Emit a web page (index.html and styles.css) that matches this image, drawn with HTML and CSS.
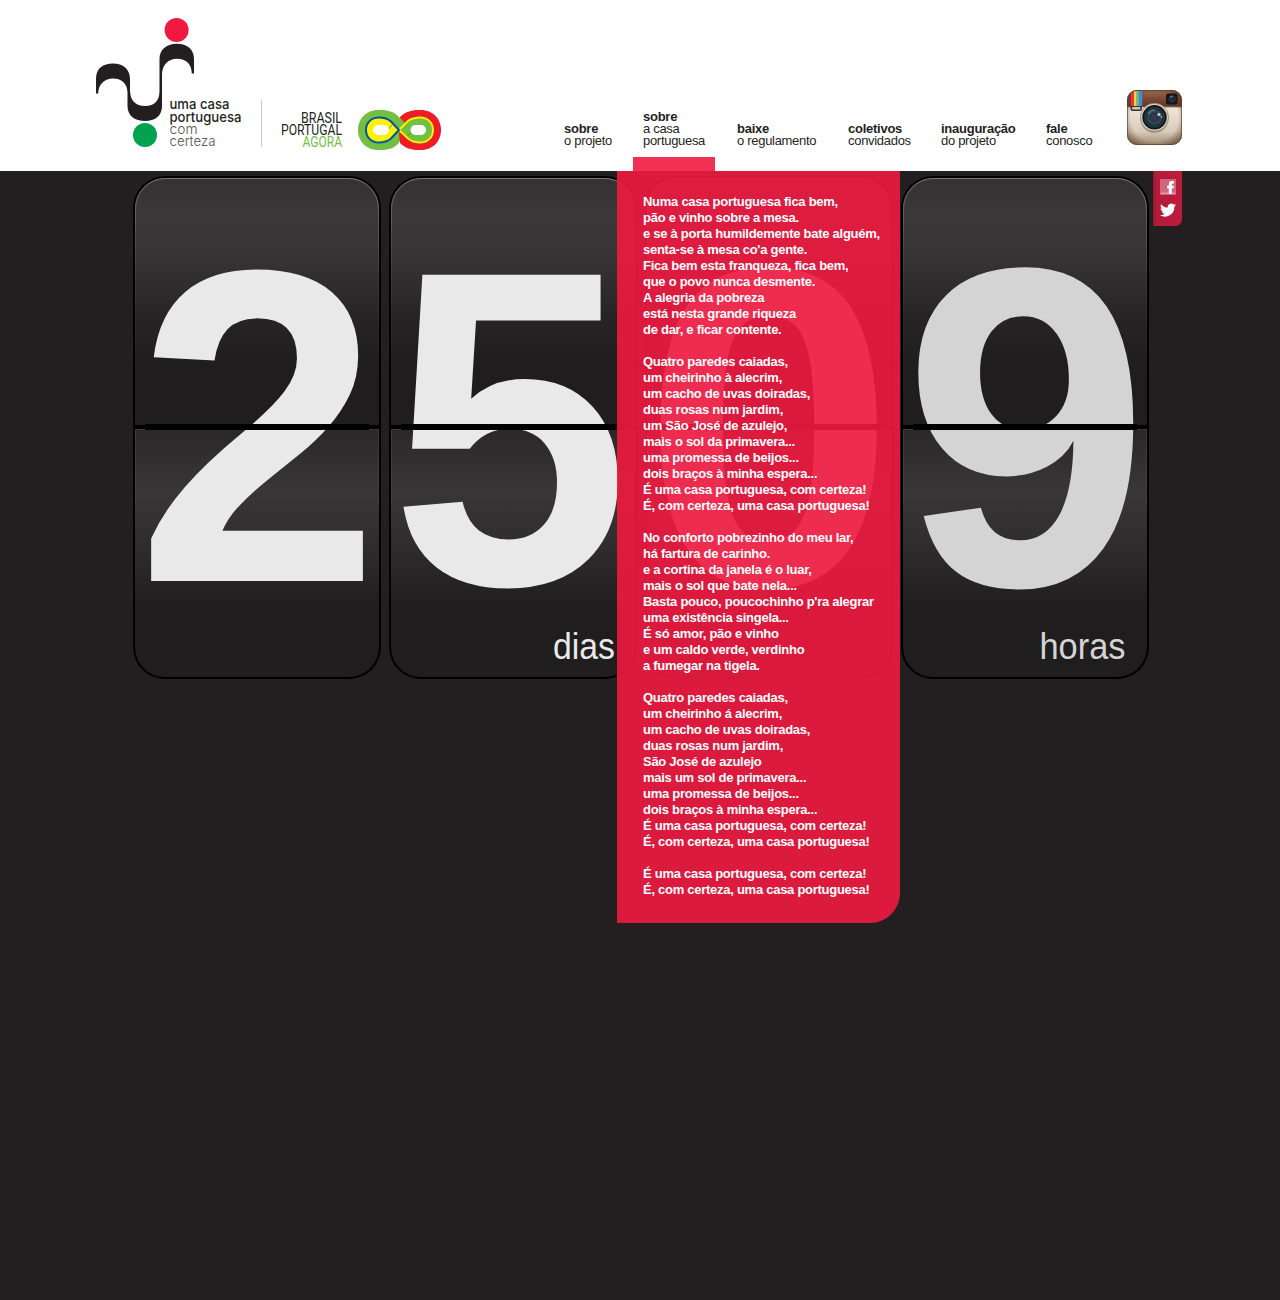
FILE: index.html
```html
<!DOCTYPE html>
<html lang="pt">
<head>
<meta charset="utf-8">
<title>Uma casa portuguesa com certeza</title>
<link rel="stylesheet" href="styles.css">
</head>
<body>
<header class="header">
  <svg class="brand" width="360" height="171" viewBox="90 0 360 171" role="img" aria-label="Uma casa portuguesa com certeza, Brasil Portugal agora">
    <circle cx="176.6" cy="30" r="12" fill="#f0193f"/>
    <circle cx="145" cy="135" r="12" fill="#00a24f"/>
    <path fill="#231f20" d="M96 93.500V79C96 68 103 63.400 113 63.400S130 69 130 79V90C130 100 135 106 145 106S159.500 100 159.500 91V59C159.500 49 167 43.700 177 43.700S194 49 194 59V73.500H191.800C191.800 64 186 58.700 177 58.700S162 65 162 75V106C162 116 155 121 145 121S127.500 116 127.500 106V93C127.500 83 121 78.500 113 78.500S98.200 84 98.200 93.500Z"/>
    <g class="brand-name">
      <text x="169.500" y="109" textLength="60" lengthAdjust="spacingAndGlyphs">uma casa</text>
      <text x="169.500" y="121.500" textLength="72" lengthAdjust="spacingAndGlyphs">portuguesa</text>
      <g class="brand-light">
        <text x="169.500" y="134" textLength="28" lengthAdjust="spacingAndGlyphs">com</text>
        <text x="169.500" y="146.300" textLength="46" lengthAdjust="spacingAndGlyphs">certeza</text>
      </g>
    </g>
    <path d="M261.500 100V147" stroke="#c9c9c9"/>
    <g class="partner">
      <text x="301" y="122.800" textLength="41" lengthAdjust="spacingAndGlyphs">BRASIL</text>
      <text x="281" y="134.900" textLength="61" lengthAdjust="spacingAndGlyphs">PORTUGAL</text>
      <text x="302.500" y="146.800" textLength="39.500" lengthAdjust="spacingAndGlyphs" fill="#72bf44">AGORA</text>
    </g>
    <path fill="#ee1c25" d="M400 117C405 112 411 110 418 110H421C433 110 441 119 441 130S433 150 421 150H418C411 150 405 148 400 143Z"/>
    <path fill="#72bf44" d="M378 110H381C389 110 394 112 399 117L407 125L399 143C394 148 389 150 381 150H378C366 150 358 141 358 130S366 110 378 110Z"/>
    <path fill="#ee1c25" d="M399 131L407 125V143L405 145.500L399.500 140Z"/>
    <path fill="#72bf44" stroke="#fff200" stroke-width="2" d="M399 130L408 121C412 118 416 117.500 420 117.500C428 117.500 433 123 433 130S428 142.500 420 142.500C416 142.500 412 142 408 138.500Z"/>
    <path fill="#fff200" stroke="#0054a6" stroke-width="2" d="M399 130L391 121.500C387 118 384 117.500 379 117.500C371 117.500 366 123 366 130S371 142.500 379 142.500C384 142.500 387 142 391 138.500Z"/>
    <path d="M388 129.500L393 124M408 135.500L412 131.500" stroke="#756c20" stroke-width=".8"/>
    <rect x="373" y="125" width="16" height="10" rx="5" fill="#fff"/>
    <rect x="410.500" y="125" width="15.500" height="10" rx="5" fill="#fff"/>
  </svg>
  <nav class="nav">
    <a class="n1"><b>sobre</b>o projeto</a>
    <a class="n2 active"><b>sobre</b>a casa<br>portuguesa</a>
    <a class="n3"><b>baixe</b>o regulamento</a>
    <a class="n4"><b>coletivos</b>convidados</a>
    <a class="n5"><b>inauguração</b>do projeto</a>
    <a class="n6"><b>fale</b>conosco</a>
  </nav>
  <svg class="camera" width="55" height="55" viewBox="0 0 55 55" role="img" aria-label="Instagram">
    <defs>
      <linearGradient id="cream" x2="0" y2="1"><stop offset=".3" stop-color="#efe6d8"/><stop offset=".75" stop-color="#d9ccb9"/><stop offset="1" stop-color="#a08b75"/></linearGradient>
      <linearGradient id="leather" x2="0" y2="1"><stop stop-color="#9c6d52"/><stop offset=".5" stop-color="#7d4a33"/><stop offset="1" stop-color="#633524"/></linearGradient>
      <radialGradient id="edge" r=".7"><stop offset=".62" stop-color="#52351f" stop-opacity="0"/><stop offset="1" stop-color="#52351f" stop-opacity=".85"/></radialGradient>
      <radialGradient id="lens"><stop stop-color="#58304f"/><stop offset=".4" stop-color="#27344a"/><stop offset=".7" stop-color="#304c57"/><stop offset="1" stop-color="#090d14"/></radialGradient>
      <clipPath id="body"><rect width="55" height="55" rx="10"/></clipPath>
    </defs>
    <g clip-path="url(#body)">
      <rect width="55" height="55" fill="url(#cream)"/>
      <rect width="55" height="16.500" fill="url(#leather)"/>
      <path d="M0 16.800H55" stroke="#41251a" stroke-width=".8"/>
      <rect x="3.500" y="15" width="11.500" height="6" rx="2" fill="#38332c"/>
      <rect x="5" y="17" width="8.500" height="2.500" rx="1" fill="#cbc6b8"/>
      <rect width="55" height="55" fill="url(#edge)"/>
      <path fill="#f1294c" d="M4 1h3v15H4z"/><path fill="#f7d82b" d="M7 1h2.700v15H7z"/><path fill="#65b98a" d="M9.700 1h2.500v15H9.700z"/><path fill="#3c8be8" d="M12.200 1h3v15h-3z"/>
    </g>
    <rect x=".5" y=".5" width="54" height="54" rx="9.500" fill="none" stroke="#5b3a2a" stroke-opacity=".65"/>
    <rect x="39" y="3.500" width="11.500" height="11" rx="2.500" fill="#17131a"/><circle cx="45" cy="9" r="3.800" fill="#252e40"/><path d="M43 7l3-1" stroke="#71869a"/>
    <circle cx="27.500" cy="29" r="14" fill="#604832" opacity=".4"/>
    <circle cx="27.500" cy="27.300" r="14" fill="#d9d3c9" stroke="#8c7b69" stroke-width=".7"/>
    <circle cx="27.500" cy="27.300" r="12.200" fill="#15171b"/>
    <circle cx="27.500" cy="27.300" r="9.700" fill="url(#lens)" stroke="#416571" stroke-width=".7"/>
    <path d="M21 24q2.500-4 7-4" stroke="#56858c" stroke-width="2" fill="none" opacity=".7"/>
    <circle cx="32" cy="24.500" r="1.600" fill="#b9d3dd"/><circle cx="34.500" cy="27" r=".9" fill="#8fb0c5"/>
  </svg>
</header>

<main class="stage">
  <section class="clock">
    <svg class="card" viewBox="0 0 248 503">
      <defs>
        <linearGradient id="upper" x2="0" y2="1"><stop stop-color="#333132"/><stop offset=".12" stop-color="#393738"/><stop offset=".28" stop-color="#393637"/><stop offset=".56" stop-color="#272425"/><stop offset=".76" stop-color="#1f1d1e"/><stop offset="1" stop-color="#1f1d1e"/></linearGradient>
        <linearGradient id="lower" x2="0" y2="1"><stop stop-color="#292728"/><stop offset=".24" stop-color="#393637"/><stop offset=".42" stop-color="#322f30"/><stop offset=".73" stop-color="#1f1d1e"/><stop offset="1" stop-color="#1f1d1e"/></linearGradient>
        <linearGradient id="rim" x2="0" y2="1"><stop stop-color="#777"/><stop offset=".2" stop-color="#555"/><stop offset=".6" stop-color="#333" stop-opacity=".3"/><stop offset="1" stop-color="#222" stop-opacity="0"/></linearGradient>
        <g id="plate">
          <rect width="248" height="503" rx="32"/>
          <path fill="url(#upper)" d="M2 249V32A30 30 0 0 1 32 2H216A30 30 0 0 1 246 32V249Z"/>
          <path fill="none" stroke="url(#rim)" d="M2.500 249V32.500A30 30 0 0 1 32.500 2.500H215.500A30 30 0 0 1 245.500 32.500V249"/>
          <path fill="url(#lower)" d="M2 253H246V471A30 30 0 0 1 216 501H32A30 30 0 0 1 2 471Z"/>
          <path fill="none" stroke="#464445" d="M2.500 330V253.500H245.500V330" opacity=".7"/>
        </g>
        <path id="hinge" d="M2 249H12V248H236V249H246V253H236V254H12V253H2Z"/>
      </defs>
      <use href="#plate"/>
      <text class="digit" transform="translate(125.200 405) scale(.986 1)">2</text>
      <use href="#hinge"/>
    </svg>
    <svg class="card" viewBox="0 0 248 503">
      <use href="#plate"/>
      <text class="digit" transform="translate(121 408) scale(.966 1.008)">5</text>
      <text class="unit" x="164" y="483" textLength="62" lengthAdjust="spacingAndGlyphs">dias</text>
      <use href="#hinge"/>
    </svg>
    <svg class="card dim" viewBox="0 0 248 503">
      <use href="#plate"/>
      <text class="digit" transform="translate(124 409) scale(1.019 1.020)">0</text>
      <use href="#hinge"/>
    </svg>
    <svg class="card dim" viewBox="0 0 248 503">
      <use href="#plate"/>
      <text class="digit" transform="translate(125.300 409) scale(.995 1.020)">9</text>
      <text class="unit" x="138.500" y="483" textLength="86" lengthAdjust="spacingAndGlyphs">horas</text>
      <use href="#hinge"/>
    </svg>
  </section>

  <article class="lyrics">
    <p>Numa casa portuguesa fica bem,<br>pão e vinho sobre a mesa.<br>e se à porta humildemente bate alguém,<br>senta-se à mesa co'a gente.<br>Fica bem esta franqueza, fica bem,<br>que o povo nunca desmente.<br>A alegria da pobreza<br>está nesta grande riqueza<br>de dar, e ficar contente.</p>
    <p>Quatro paredes caiadas,<br>um cheirinho à alecrim,<br>um cacho de uvas doiradas,<br>duas rosas num jardim,<br>um São José de azulejo,<br>mais o sol da primavera...<br>uma promessa de beijos...<br>dois braços à minha espera...<br>É uma casa portuguesa, com certeza!<br>É, com certeza, uma casa portuguesa!</p>
    <p>No conforto pobrezinho do meu lar,<br>há fartura de carinho.<br>e a cortina da janela é o luar,<br>mais o sol que bate nela...<br>Basta pouco, poucochinho p'ra alegrar<br>uma existência singela...<br>É só amor, pão e vinho<br>e um caldo verde, verdinho<br>a fumegar na tigela.</p>
    <p>Quatro paredes caiadas,<br>um cheirinho á alecrim,<br>um cacho de uvas doiradas,<br>duas rosas num jardim,<br>São José de azulejo<br>mais um sol de primavera...<br>uma promessa de beijos...<br>dois braços à minha espera...<br>É uma casa portuguesa, com certeza!<br>É, com certeza, uma casa portuguesa!</p>
    <p>É uma casa portuguesa, com certeza!<br>É, com certeza, uma casa portuguesa!</p>
  </article>

  <aside class="social">
    <svg width="16" height="16" viewBox="0 0 16 16" role="img" aria-label="Facebook"><path fill="#d0667b" d="M0 0h16v16H0z"/><path fill="#e29aa8" d="M1 13.500h14V15H1z"/><path fill="#fff" d="M8.800 15V9.300H7V6.700h1.800V5.200C8.800 3 10 2 12 2h2v2.500h-1.200c-.8 0-1 .4-1 1v1.200H14l-.3 2.600h-1.900V15z"/></svg>
    <svg width="16" height="14" viewBox="0 0 24 20" role="img" aria-label="Twitter"><path fill="#fff" d="M24 2.600a10 10 0 0 1-2.800.8A5 5 0 0 0 23.300.7a10 10 0 0 1-3.100 1.200 4.900 4.900 0 0 0-8.400 4.500A14 14 0 0 1 1.700 1.200a4.900 4.900 0 0 0 1.500 6.600A5 5 0 0 1 1 7.200a4.900 4.900 0 0 0 4 4.900 5 5 0 0 1-2.300.1 4.900 4.900 0 0 0 4.600 3.400A10 10 0 0 1 0 17.600 14 14 0 0 0 21.500 5.100 10 10 0 0 0 24 2.600z"/></svg>
  </aside>
</main>
</body>
</html>
```

FILE: styles.css
```css
* { box-sizing: border-box; }

body {
  margin: 0;
  min-height: 1300px;
  background: #231f20;
  color: #231f20;
  font-family: "Liberation Sans", Arial, sans-serif;
}

.header {
  display: flex;
  height: 171px;
  padding-left: 90px;
  background: #fff;
}

.brand { flex: none; }

.brand-name {
  font: 500 14.5px Inter, sans-serif;
  fill: #231f20;
}

.brand-light {
  font-weight: 300;
  fill: #555;
}

.partner {
  font: 400 14px Roboto, sans-serif;
  fill: #231f20;
}

.nav {
  display: flex;
  flex: none;
  align-items: flex-end;
  margin-left: 114px;
  font-size: 13px;
  line-height: 12px;
  letter-spacing: -0.3px;
  white-space: nowrap;
}

.nav a {
  height: 61px;
  padding-top: 13px;
}

.nav b {
  display: block;
  letter-spacing: -0.25px;
}

.nav .n1 { width: 69px; }
.nav .n2 { width: 82px; margin-right: 22px; padding-left: 10px; }
.nav .n3 { width: 111px; }
.nav .n4 { width: 93px; }
.nav .n5 { width: 105px; }
.nav .n6 { width: 81px; }

.nav .active {
  height: 61px;
  padding-top: 1px;
  background: linear-gradient(#f23053, #f23053) bottom / 100% 14px no-repeat;
}

.camera {
  flex: none;
  margin-top: 90px;
}

.stage { position: relative; }

.clock {
  display: flex;
  gap: 8px;
  padding: 5px 0 0 133px;
}

.card {
  display: block;
  flex: none;
  width: 248px;
  height: 503px;
  fill: #000;
}

.digit {
  font-size: 446px;
  font-weight: 700;
  text-anchor: middle;
  fill: #e9e9e9;
}

.unit {
  font-size: 36px;
  fill: #e9e9e9;
}

.dim .digit,
.dim .unit { fill: #d4d4d4; }

/* Song panel that drops down over the countdown */
.lyrics {
  position: absolute;
  top: 0;
  left: 617px;
  width: 283px;
  height: 752px;
  padding: 23px 0 0 26px;
  border-bottom-right-radius: 30px;
  background: rgba(239, 25, 64, 0.9);
  color: #fff;
  font-size: 13px;
  font-weight: 700;
  line-height: 16px;
  letter-spacing: -0.27px;
  white-space: nowrap;
}

.lyrics p { margin: 0 0 16px; }

/* Social tab hanging from the header */
.social {
  position: absolute;
  top: 0;
  left: 1153px;
  display: flex;
  flex-direction: column;
  align-items: center;
  gap: 8px;
  width: 29px;
  height: 55px;
  padding-top: 8px;
  border-bottom-right-radius: 7px;
  background: linear-gradient(90deg, #8f1a31, #b41b3a 3px, #bd1b3c);
}
```
